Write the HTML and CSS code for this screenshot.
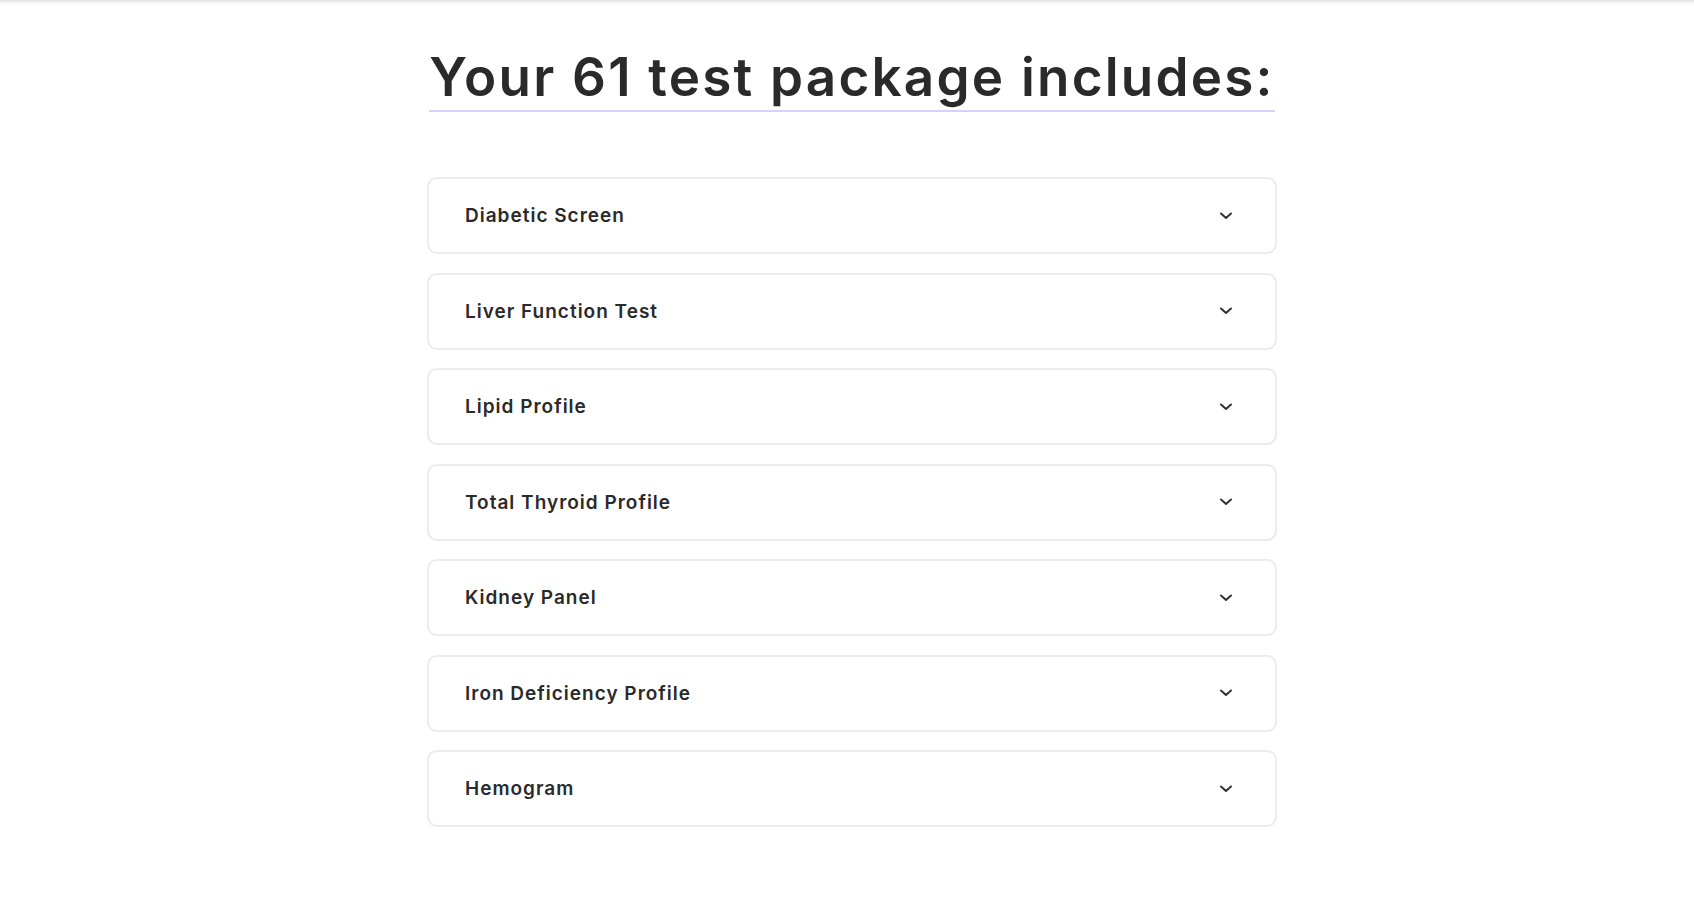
FILE: index.html
```html
<!DOCTYPE html>
<html lang="en">
<head>
<meta charset="utf-8">
<title>Your 61 test package includes</title>
<link rel="stylesheet" href="styles.css">
</head>
<body>
<div class="topshade"></div>
<main class="page">
  <section class="package">
    <div class="title-wrap">
      <h1 class="title">Your 61 test package includes:</h1>
    </div>
    <ul class="list">
      <li class="item"><span class="item-name">Diabetic Screen</span><svg class="chev" viewBox="0 0 14 8" width="14" height="8"><path d="M2 1.5 L7 6 L12 1.5" fill="none" stroke="#333" stroke-width="2" stroke-linecap="round" stroke-linejoin="round"/></svg></li>
      <li class="item"><span class="item-name">Liver Function Test</span><svg class="chev" viewBox="0 0 14 8" width="14" height="8"><path d="M2 1.5 L7 6 L12 1.5" fill="none" stroke="#333" stroke-width="2" stroke-linecap="round" stroke-linejoin="round"/></svg></li>
      <li class="item"><span class="item-name">Lipid Profile</span><svg class="chev" viewBox="0 0 14 8" width="14" height="8"><path d="M2 1.5 L7 6 L12 1.5" fill="none" stroke="#333" stroke-width="2" stroke-linecap="round" stroke-linejoin="round"/></svg></li>
      <li class="item"><span class="item-name">Total Thyroid Profile</span><svg class="chev" viewBox="0 0 14 8" width="14" height="8"><path d="M2 1.5 L7 6 L12 1.5" fill="none" stroke="#333" stroke-width="2" stroke-linecap="round" stroke-linejoin="round"/></svg></li>
      <li class="item"><span class="item-name">Kidney Panel</span><svg class="chev" viewBox="0 0 14 8" width="14" height="8"><path d="M2 1.5 L7 6 L12 1.5" fill="none" stroke="#333" stroke-width="2" stroke-linecap="round" stroke-linejoin="round"/></svg></li>
      <li class="item"><span class="item-name">Iron Deficiency Profile</span><svg class="chev" viewBox="0 0 14 8" width="14" height="8"><path d="M2 1.5 L7 6 L12 1.5" fill="none" stroke="#333" stroke-width="2" stroke-linecap="round" stroke-linejoin="round"/></svg></li>
      <li class="item"><span class="item-name">Hemogram</span><svg class="chev" viewBox="0 0 14 8" width="14" height="8"><path d="M2 1.5 L7 6 L12 1.5" fill="none" stroke="#333" stroke-width="2" stroke-linecap="round" stroke-linejoin="round"/></svg></li>
    </ul>
  </section>
</main>
</body>
</html>
```

FILE: styles.css
```css
* { box-sizing: border-box; }

html, body {
  margin: 0;
  padding: 0;
  background: #ffffff;
}

body {
  font-family: "Inter", "Open Sans", "Liberation Sans", sans-serif;
  color: #232323;
}

.topshade {
  height: 5px;
  background: linear-gradient(to bottom, #dedede 0%, #f3f3f3 50%, #ffffff 100%);
}

.page {
  display: flex;
  justify-content: center;
  padding-left: 10px;
}

.package {
  width: 850px;
  display: flex;
  flex-direction: column;
}

.title-wrap {
  display: flex;
  justify-content: center;
  padding-top: 42px;
}

.title {
  margin: 0;
  font-family: "Inter", "Open Sans", sans-serif;
  font-weight: 600;
  font-size: 53px;
  line-height: 60px;
  letter-spacing: 2.2px;
  color: #2a2a2a;
  padding-bottom: 3px;
  border-bottom: 2px solid #d6d1fb;
}

.list {
  list-style: none;
  margin: 65px 0 0;
  padding: 0;
  display: flex;
  flex-direction: column;
  gap: 18.5px;
}

.item {
  height: 77px;
  border: 2px solid #ececec;
  border-radius: 10px;
  display: flex;
  align-items: center;
  justify-content: space-between;
  padding: 0 42px 0 36px;
}

.item-name {
  font-size: 19px;
  font-weight: 600;
  letter-spacing: 1px;
  color: #2a2a2a;
}

.chev {
  display: block;
}
```
